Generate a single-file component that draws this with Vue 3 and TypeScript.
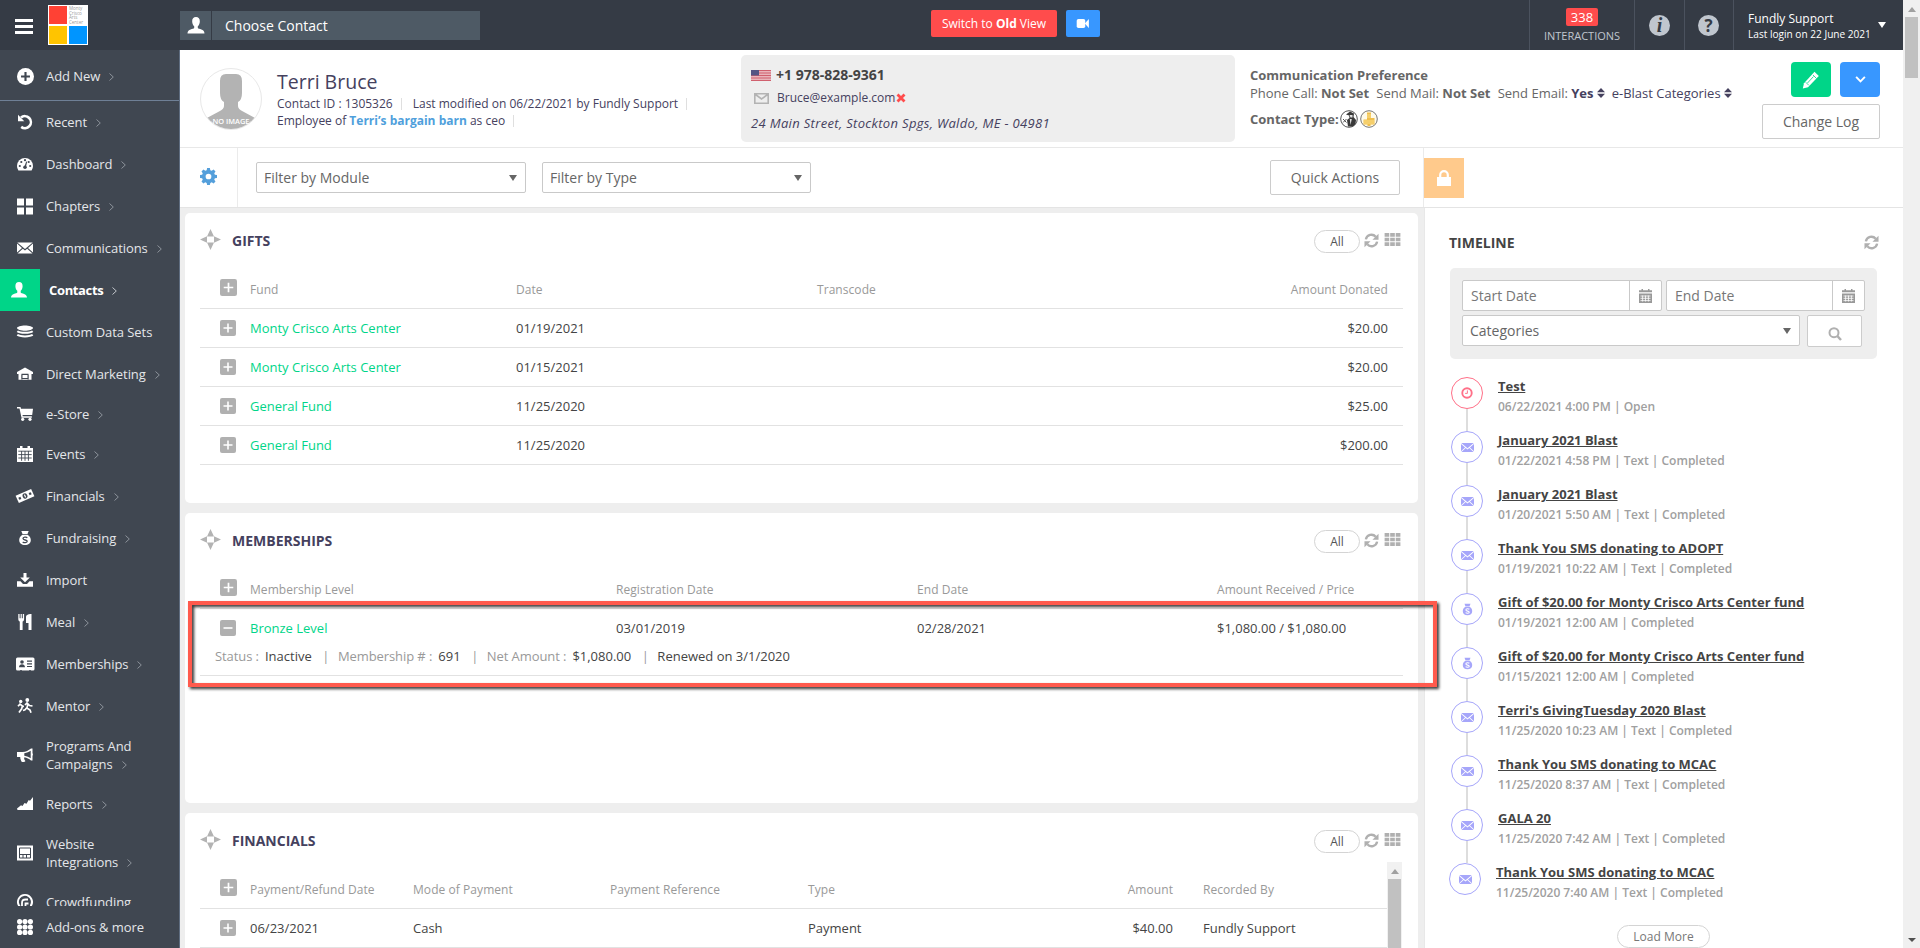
<script setup lang="ts">
interface NavItem {
  label: string
  icon: string
  height: number
  arrow?: boolean
  active?: boolean
  lines?: string[]
}

interface TimelineEntry {
  title: string
  meta: string
  kind: 'clock' | 'mail' | 'bag'
}

const icons: Record<string, string> = {
  addCircle:
    '<circle cx="8" cy="8" r="8"/><path d="M8 3.8v8.4M3.8 8h8.4" stroke="#404751" stroke-width="2"/>',
  recent:
    '<path d="M4 3.6A6 6 0 1 1 4.2 12.9" fill="none" stroke="currentColor" stroke-width="2.6"/><path d="M1 .8v6.4h6.3z"/>',
  dashboard:
    '<path d="M0 10a8 8 0 0 1 16 0 8 8 0 0 1-1.4 4.5H1.4A8 8 0 0 1 0 10z"/><g fill="#404751"><circle cx="2.8" cy="10" r="1.1"/><circle cx="4.3" cy="6" r="1.1"/><circle cx="8" cy="4.2" r="1.1"/><circle cx="11.7" cy="6" r="1.1"/><circle cx="13.2" cy="10" r="1.1"/><circle cx="8" cy="11.3" r="1.8"/><path d="M7.4 10.8 9.2 5.4l.9.3-1.2 5.6z"/></g>',
  chapters: '<path d="M0 0h7v7H0zM9 0h7v7H9zM0 9h7v7H0zM9 9h7v7H9z" transform="translate(0 .5)"/>',
  mail:
    '<path d="M.3 2.6h15.4L8 9z"/><path d="M0 3.6 5 8 0 12.6zM16 3.6 11 8l5 4.6zM5.8 8.7 8 10.6l2.2-1.9 5.3 4.7H.5z"/>',
  person:
    '<path d="M8 0C5.600 0 4.300 1.600 4.400 4.200c.1 2 .8 3.600 1.900 4.500v1.700C5.700 11.600 0 11.300 0 15.500h16c0-4.200-5.700-3.900-6.300-5.100V8.700c1.100-.9 1.800-2.500 1.900-4.500C11.700 1.600 10.400 0 8 0z"/>',
  layers:
    '<path d="M8 1.500c4 0 8 1.200 8 2.600S12 6.800 8 6.800 0 5.500 0 4.100s4-2.600 8-2.600z"/><path d="M.3 7.200C3 9.300 13 9.300 15.700 7.200M.3 10.800c2.700 2.100 12.700 2.100 15.400 0" fill="none" stroke="currentColor" stroke-width="2"/>',
  house:
    '<path d="M8 1.500 16 6v2h-1.500v5.800H1.500V8H0V6z"/><path d="M4.500 8.400h7M4.500 12.500h7M4.900 8.400v5M11.100 8.400v5" stroke="#404751" stroke-width="1.200" fill="none"/>',
  cart:
    '<path d="M0 1h3.500l.5 1.700h12L15.200 9H5.500l.3 1.300h9v1.400H4.500L2.500 2.500H0z"/><circle cx="5.700" cy="13.300" r="1.600"/><circle cx="13" cy="13.300" r="1.600"/>',
  calendar:
    '<path d="M0 2h16v14H0z"/><path d="M3 0h2.500v3H3zM10.500 0H13v3h-2.500z"/><path d="M1.300 5.200h13.400M1.300 8.600h13.400M1.300 12h13.400M4.600 5v9.800M8 5v9.800M11.400 5v9.800" stroke="#404751" stroke-width=".9"/>',
  money:
    '<g transform="rotate(-24 8 8)"><path d="M-.5 4h17v8h-17z"/><ellipse cx="8" cy="8" rx="2.400" ry="2.600" fill="#404751"/><path d="M1.200 8h2.300M12.500 8h2.300" stroke="#404751" stroke-width="2.400"/><path d="M8 6.500v3" stroke="currentColor" stroke-width="1.200"/></g>',
  bag:
    '<path d="M4.300 1h7.400L10.500 4h-5zM5.400 4.700h5.200C13 6.300 13.800 8.300 13.800 10c0 3.200-2.400 5-5.800 5s-5.800-1.800-5.800-5c0-1.700.8-3.700 3.200-5.300z"/><path d="M10.300 7.700C9.300 6.800 6 6.800 6 8.600s4.200 1 4.200 2.700c0 1.600-3.200 1.700-4.500.6" fill="none" stroke="var(--bag-ink, #404751)" stroke-width="1.300"/>',
  import:
    '<path d="M6.500 1h3v4.500h3.300L8 10.300 3.200 5.500h3.300z"/><path d="M0 9.200h3.500L6 12h4l2.500-2.800H16v5.500H0z"/>',
  meal:
    '<path d="M1.300 0h1.300v4.300h1V0h1.200v4.300h1V0h1.300v5.200c0 1.300-.7 2-1.500 2.300V16H2.800V7.500C2 7.200 1.300 6.500 1.300 5.200zM9 3.200C9 1.200 10.500.2 14.500 0v16h-3V9H9z"/>',
  idCard:
    '<rect x="-1" y="1.500" width="18.500" height="13" rx="1.500"/><g fill="#404751"><circle cx="5" cy="6" r="1.800"/><path d="M2 11.300c0-4 6-4 6 0zM10 4.600h5v1.100h-5zM10 7.300h5v1.100h-5zM10 10h5v1.100h-5zM3 14h2v.8H3zM12 14h2v.8h-2z"/></g>',
  mentor:
    '<circle cx="3.700" cy="3.500" r="1.700"/><circle cx="10.300" cy="2" r="1.900"/><path d="M1 8.300l2-2.200 2.500 2L4.500 11 2 14.500M5 8l2 .3M8 7l2-2 2.500 2.500L15.500 8M10.800 6l-.8 4 3 2 1 2.800M10 9.500l-2 2.300L6 12.500" fill="none" stroke="currentColor" stroke-width="1.700"/>',
  megaphone:
    '<path d="M0 5h5.500C9 4.800 11.500 3.500 14 1.500h1.500v4.700c.6.200.6 2.300 0 2.600v4.700H14c-2-1.600-4-2.700-6.600-3.200-.8 1.700.3 2.700 1 3.700-.5 1.200-3 1.300-4 .5C3.800 12.500 3 11.500 3.300 10H0z"/><path d="M7.300 6.300C10 5.800 12 5 13.700 3.800v7.500C12 10 10 9.100 7.300 8.700z" fill="#404751"/>',
  reports: '<path d="M.5 14 0 12.500l4-3.300 1.500.7L7.500 7l2 .7L11.700 4l1.300.8L16 1v13z"/>',
  website:
    '<path d="M0 .5h16v15H0z"/><path d="M2.500 3h11v10h-11zM2.500 9.500h11M6 9.500V13M9.500 9.500V13" fill="none" stroke="#404751" stroke-width="1"/>',
  crowd:
    '<path d="M8 0a8 8 0 0 0-6.600 12.500h2.700A6 6 0 1 1 13 11v1.500h1.600A8 8 0 0 0 8 0z"/><path d="M5 13V9q0-3.500 3.500-3.500H11M8.500 12V9.500h3" fill="none" stroke="currentColor" stroke-width="1.800"/>',
  dots:
    '<circle cx="2.600" cy="2.600" r="2.600"/><circle cx="8" cy="2.600" r="2.600"/><circle cx="13.400" cy="2.600" r="2.600"/><circle cx="2.600" cy="8" r="2.600"/><circle cx="8" cy="8" r="2.600"/><circle cx="13.400" cy="8" r="2.600"/><circle cx="2.600" cy="13.400" r="2.600"/><circle cx="8" cy="13.400" r="2.600"/><circle cx="13.400" cy="13.400" r="2.600"/>',
  gear:
    '<path fill-rule="evenodd" d="M6.700 0h2.600l.4 2 1.300.6 1.800-1.200 1.800 1.800L13.400 5l.6 1.300 2 .4v2.600l-2 .4-.6 1.300 1.200 1.800-1.800 1.800-1.800-1.200-1.300.6-.4 2H6.700l-.4-2-1.300-.6-1.800 1.200-1.800-1.800L2.600 11 2 9.700 0 9.300V6.700l2-.4L2.600 5 1.400 3.200l1.800-1.800L5 2.600 6.300 2zM8 5.300a2.700 2.700 0 1 0 0 5.400 2.700 2.700 0 0 0 0-5.400z"/>',
  refresh:
    '<path d="M2 6.800A6 6 0 0 1 12.500 4M14 9.200A6 6 0 0 1 3.500 12" fill="none" stroke="currentColor" stroke-width="2.500"/><path d="M15.500.7v6.500H9zM.5 15.300V8.800H7z"/>',
  grid:
    '<path d="M0 0h5v4H0zM6 0h5v4H6zM12 0h5v4h-5zM0 5h5v4H0zM6 5h5v4H6zM12 5h5v4h-5zM0 10h5v4H0zM6 10h5v4H6zM12 10h5v4h-5z"/>',
  move:
    '<path d="M10.500 0 14 7.400H7zM10.500 21 7 13.600h7zM0 10.500 7 7.200v6.600zM21 10.500l-7-3.300v6.600z"/>',
  plus: '<rect width="16" height="16" rx="2"/><path d="M8 3.500v9M3.500 8h9" stroke="#fff" stroke-width="1.600"/>',
  minus: '<rect width="16" height="16" rx="2"/><path d="M3.500 8h9" stroke="#fff" stroke-width="1.600"/>',
  clock:
    '<circle cx="8" cy="8" r="6.300" fill="none" stroke="currentColor" stroke-width="2.500"/><path d="M8.500 4.500v4H5.500" fill="none" stroke="currentColor" stroke-width="1.300"/>',
  smallCal:
    '<path d="M0 1.200h13v2H0zM2.500 0h1.500v2H2.500zM9 0h1.500v2H9zM0 4.500h13V14H0z"/><path d="M1.500 7h10M1.500 9.300h10M1.500 11.600h10M3.600 6.500v6M6.500 6.500v6M9.400 6.500v6" stroke="#fff" stroke-width=".8"/>',
  search:
    '<circle cx="6" cy="5.700" r="4.500" fill="none" stroke="currentColor" stroke-width="2"/><path d="m9.300 9 3.700 4" stroke="currentColor" stroke-width="2.500"/>',
}

const nav: NavItem[] = [
  { label: 'Recent', icon: 'recent', height: 42, arrow: true },
  { label: 'Dashboard', icon: 'dashboard', height: 42, arrow: true },
  { label: 'Chapters', icon: 'chapters', height: 42, arrow: true },
  { label: 'Communications', icon: 'mail', height: 42, arrow: true },
  { label: 'Contacts', icon: 'person', height: 42, arrow: true, active: true },
  { label: 'Custom Data Sets', icon: 'layers', height: 42 },
  { label: 'Direct Marketing', icon: 'house', height: 42, arrow: true },
  { label: 'e-Store', icon: 'cart', height: 38, arrow: true },
  { label: 'Events', icon: 'calendar', height: 42, arrow: true },
  { label: 'Financials', icon: 'money', height: 42, arrow: true },
  { label: 'Fundraising', icon: 'bag', height: 42, arrow: true },
  { label: 'Import', icon: 'import', height: 42 },
  { label: 'Meal', icon: 'meal', height: 42, arrow: true },
  { label: 'Memberships', icon: 'idCard', height: 42, arrow: true },
  { label: 'Mentor', icon: 'mentor', height: 42, arrow: true },
  { label: 'Programs And Campaigns', lines: ['Programs And', 'Campaigns'], icon: 'megaphone', height: 56, arrow: true },
  { label: 'Reports', icon: 'reports', height: 42, arrow: true },
  { label: 'Website Integrations', lines: ['Website', 'Integrations'], icon: 'website', height: 56, arrow: true },
  { label: 'Crowdfunding', icon: 'crowd', height: 42 },
]

const gifts = [
  { fund: 'Monty Crisco Arts Center', date: '01/19/2021', amount: '$20.00' },
  { fund: 'Monty Crisco Arts Center', date: '01/15/2021', amount: '$20.00' },
  { fund: 'General Fund', date: '11/25/2020', amount: '$25.00' },
  { fund: 'General Fund', date: '11/25/2020', amount: '$200.00' },
]

const timeline: TimelineEntry[] = [
  { title: 'Test', meta: '06/22/2021 4:00 PM | Open', kind: 'clock' },
  { title: 'January 2021 Blast', meta: '01/22/2021 4:58 PM | Text | Completed', kind: 'mail' },
  { title: 'January 2021 Blast', meta: '01/20/2021 5:50 AM | Text | Completed', kind: 'mail' },
  { title: 'Thank You SMS donating to ADOPT', meta: '01/19/2021 10:22 AM | Text | Completed', kind: 'mail' },
  { title: 'Gift of $20.00 for Monty Crisco Arts Center fund', meta: '01/19/2021 12:00 AM | Completed', kind: 'bag' },
  { title: 'Gift of $20.00 for Monty Crisco Arts Center fund', meta: '01/15/2021 12:00 AM | Completed', kind: 'bag' },
  { title: "Terri's GivingTuesday 2020 Blast", meta: '11/25/2020 10:23 AM | Text | Completed', kind: 'mail' },
  { title: 'Thank You SMS donating to MCAC', meta: '11/25/2020 8:37 AM | Text | Completed', kind: 'mail' },
  { title: 'GALA 20', meta: '11/25/2020 7:42 AM | Text | Completed', kind: 'mail' },
  { title: 'Thank You SMS donating to MCAC', meta: '11/25/2020 7:40 AM | Text | Completed', kind: 'mail' },
]
</script>

<template>
  <div class="page">
    <div class="app">
      <header class="top">
        <div class="burger"><i></i><i></i><i></i></div>
        <div class="logo">
          <span class="red"></span>
          <span class="words">Monty<br />Crisco<br />Arts<br />Center</span>
          <span class="yellow"></span>
          <span class="blue"></span>
        </div>
        <div class="choose">
          <span class="choose-icon"><svg viewBox="0 0 16 16" v-html="icons.person"></svg></span>
          <span class="choose-text">Choose Contact</span>
        </div>
        <div class="switch">Switch to&nbsp;<b>Old</b>&nbsp;View</div>
        <div class="video">
          <svg viewBox="0 0 14 10"><rect width="9.500" height="10" rx="2" /><path d="M9 5 13.500 0v10z" /></svg>
        </div>
        <div class="top-right">
          <div class="cell interactions"><span class="badge">338</span><span>INTERACTIONS</span></div>
          <div class="cell info">
            <span class="round serif">i</span>
          </div>
          <div class="cell help">
            <span class="round">?</span>
          </div>
          <div class="cell user">
            <div><p class="uname">Fundly Support</p><p class="ulogin">Last login on 22 June 2021</p></div>
            <i class="tri"></i>
          </div>
        </div>
      </header>

      <div class="body">
        <aside class="side">
          <div class="nav-item add">
            <span class="nav-icon"><svg viewBox="0 0 16 16" v-html="icons.addCircle"></svg></span>
            <span class="nav-label">Add New<svg class="chev" viewBox="0 0 5 8"><path d="m.5.500 3.800 3.500L.5 7.500" /></svg></span>
          </div>
          <nav class="nav">
            <div
              v-for="item in nav"
              :key="item.label"
              class="nav-item"
              :class="{ active: item.active }"
              :style="{ height: item.height + 'px' }"
            >
              <span class="nav-icon"><svg viewBox="0 0 16 16" v-html="icons[item.icon]"></svg></span>
              <span class="nav-label">
                <template v-if="item.lines">{{ item.lines[0] }}<br />{{ item.lines[1] }}</template>
                <template v-else>{{ item.label }}</template>
                <svg v-if="item.arrow" class="chev" viewBox="0 0 5 8"><path d="m.5.500 3.800 3.500L.5 7.500" /></svg>
              </span>
            </div>
          </nav>
          <div class="nav-item addons">
            <span class="nav-icon"><svg viewBox="0 0 16 16" v-html="icons.dots"></svg></span>
            <span class="nav-label">Add-ons &amp; more</span>
          </div>
        </aside>

        <main class="main">
          <section class="contact">
            <svg class="avatar" viewBox="0 0 62 62">
              <defs><clipPath id="face"><circle cx="31" cy="31" r="30" /></clipPath></defs>
              <circle cx="31" cy="31" r="30.500" fill="#fff" stroke="#e8e8e8" />
              <path
                clip-path="url(#face)"
                d="M26 6h10q6 0 6 7v12q0 7-4 9v4q0 3 5 5.500l14 7.500v11H5V51l14-7.500q5-2.500 5-5.500v-4q-4-2-4-9V13q0-7 6-7z"
                fill="#b3b3b3"
              />
              <text x="31" y="55.500" text-anchor="middle" font-size="7.400" font-weight="600" fill="#fff">NO IMAGE</text>
            </svg>
            <div class="who">
              <h1>Terri Bruce</h1>
              <p>Contact ID : 1305326<i></i>Last modified on 06/22/2021 by Fundly Support<i></i></p>
              <p>Employee of <b>Terri’s bargain barn</b> as ceo<i></i></p>
            </div>
            <div class="reach">
              <p class="phone">
                <svg class="flag" viewBox="0 0 20 11">
                  <rect width="20" height="11" fill="#e9b4ba" />
                  <path d="M0 .5h20M0 3h20M0 5.500h20M0 8h20M0 10.500h20" stroke="#d0606e" />
                  <rect width="8" height="5.500" fill="#535584" />
                </svg>
                +1 978-828-9361
              </p>
              <p class="email">
                <svg class="env" viewBox="0 0 15 11"><path d="M.8.800h13.400v9.400H.8zM1.500 1.500l6 4.500 6-4.500" /></svg>
                <span>Bruce@example.com</span>
                <svg class="cross" viewBox="0 0 8 8"><path d="m.5.500 7 7M7.500.5l-7 7" /></svg>
              </p>
              <p class="addr">24 Main Street, Stockton Spgs, Waldo, ME - 04981</p>
            </div>
            <div class="prefs">
              <p><b>Communication Preference</b></p>
              <p class="pref-line">
                <span>Phone Call: <b>Not Set</b></span>
                <span>Send Mail: <b>Not Set</b></span>
                <span>Send Email: <b class="dark">Yes</b><svg class="sort" viewBox="0 0 8 10"><path d="M4 0l4 4.200H0zM4 10 0 5.800h8z" /></svg></span>
                <span class="dark">e-Blast Categories<svg class="sort" viewBox="0 0 8 10"><path d="M4 0l4 4.200H0zM4 10 0 5.800h8z" /></svg></span>
              </p>
              <p class="ctype">
                <b>Contact Type:</b>
                <svg viewBox="0 0 18 18">
                  <circle cx="9" cy="9" r="8.300" fill="#fff" stroke="#555" />
                  <path d="M6 4.500 10 1.500l4 2-.5 3.500 2.500 3-.5 4-2.500 2.500H8L7 10l2.500-2-.5-2.500z" fill="#3a3a3a" />
                  <path d="m3 9 3.500 3.500m0-3.500L3 12.500" stroke="#555" />
                  <path d="M9.500 5h3v2.500h-2zM9.800 9l.7 6 1.300-6z" fill="#e4e4e4" />
                </svg>
                <svg viewBox="0 0 18 18">
                  <circle cx="9" cy="9" r="8.300" fill="#fffbe9" stroke="#777" />
                  <path d="M7 2.500h4V8h3.500v6.500h-4v1.500h-3v-1.500h-4V9.500H7z" fill="#f0be4a" />
                  <path d="M7 5h4M7 7h4M4 11h10M4 13h10" stroke="#fbe08c" />
                </svg>
              </p>
            </div>
            <div class="acts">
              <div class="pair">
                <span class="edit"><svg viewBox="0 0 18 18"><path d="M12.500.8 16.800 5 6 16.200.8 17.400 2 12.200z" /><path d="m3.800 11.300 3 3M11 4l3.500 3.500M5.500 12l6-6.500" class="cut" /></svg></span>
                <span class="more"><svg viewBox="0 0 12 8"><path d="m1 1 5 5.200L11 1" /></svg></span>
              </div>
              <div class="btn log">Change Log</div>
            </div>
          </section>

          <section class="tools">
            <div class="gear"><svg viewBox="0 0 16 16" v-html="icons.gear"></svg></div>
            <div class="select">Filter by Module<i class="tri"></i></div>
            <div class="select type">Filter by Type<i class="tri"></i></div>
            <div class="btn quick">Quick Actions</div>
            <div class="lockwrap">
              <div class="lock"><svg viewBox="0 0 14 16"><path d="M0 7h14v9H0z" /><path d="M3.200 7.500V5a3.800 3.800 0 0 1 7.600 0v2.500" class="ring" /></svg></div>
            </div>
          </section>

          <div class="content">
            <div class="cards">
              <article class="card">
                <div class="card-head">
                  <svg class="move" viewBox="0 0 21 21" v-html="icons.move"></svg>
                  <h2>GIFTS</h2>
                  <span class="all">All</span>
                  <svg class="ref" viewBox="0 0 16 16" v-html="icons.refresh"></svg>
                  <svg class="grd" viewBox="0 0 17 14" v-html="icons.grid"></svg>
                </div>
                <div class="row head gifts">
                  <svg class="pm" viewBox="0 0 16 16" v-html="icons.plus"></svg>
                  <span>Fund</span><span>Date</span><span>Transcode</span><span class="r">Amount Donated</span>
                </div>
                <div v-for="(g, i) in gifts" :key="i" class="row gifts">
                  <svg class="pm" viewBox="0 0 16 16" v-html="icons.plus"></svg>
                  <span class="link">{{ g.fund }}</span><span>{{ g.date }}</span><span></span><span class="r">{{ g.amount }}</span>
                </div>
              </article>

              <article class="card">
                <div class="card-head">
                  <svg class="move" viewBox="0 0 21 21" v-html="icons.move"></svg>
                  <h2>MEMBERSHIPS</h2>
                  <span class="all">All</span>
                  <svg class="ref" viewBox="0 0 16 16" v-html="icons.refresh"></svg>
                  <svg class="grd" viewBox="0 0 17 14" v-html="icons.grid"></svg>
                </div>
                <div class="row head members">
                  <svg class="pm" viewBox="0 0 16 16" v-html="icons.plus"></svg>
                  <span>Membership Level</span><span>Registration Date</span><span>End Date</span><span>Amount Received / Price</span>
                </div>
                <div class="row members open">
                  <svg class="pm" viewBox="0 0 16 16" v-html="icons.minus"></svg>
                  <span class="link">Bronze Level</span><span>03/01/2019</span><span>02/28/2021</span><span>$1,080.00 / $1,080.00</span>
                </div>
                <div class="detail">
                  <span><em>Status :</em> Inactive</span>
                  <span><em>Membership # :</em> 691</span>
                  <span><em>Net Amount :</em> $1,080.00</span>
                  <span>Renewed on 3/1/2020</span>
                </div>
                <div class="marker"></div>
              </article>

              <article class="card">
                <div class="card-head">
                  <svg class="move" viewBox="0 0 21 21" v-html="icons.move"></svg>
                  <h2>FINANCIALS</h2>
                  <span class="all">All</span>
                  <svg class="ref" viewBox="0 0 16 16" v-html="icons.refresh"></svg>
                  <svg class="grd" viewBox="0 0 17 14" v-html="icons.grid"></svg>
                </div>
                <div class="scroller">
                  <div class="grow">
                    <div class="row head fin">
                      <svg class="pm" viewBox="0 0 16 16" v-html="icons.plus"></svg>
                      <span>Payment/Refund Date</span><span>Mode of Payment</span><span>Payment Reference</span><span>Type</span><span class="r">Amount</span><span class="rec">Recorded By</span>
                    </div>
                    <div class="row fin">
                      <svg class="pm" viewBox="0 0 16 16" v-html="icons.plus"></svg>
                      <span>06/23/2021</span><span>Cash</span><span></span><span>Payment</span><span class="r">$40.00</span><span class="rec">Fundly Support</span>
                    </div>
                  </div>
                  <div class="inner-bar"><i class="up"></i><i class="thumb"></i></div>
                </div>
              </article>
            </div>

            <aside class="time">
              <div class="time-head">
                <h2>TIMELINE</h2>
                <svg class="ref" viewBox="0 0 16 16" v-html="icons.refresh"></svg>
              </div>
              <div class="filter">
                <div class="frow">
                  <div class="date"><span>Start Date</span><i><svg viewBox="0 0 13 14" v-html="icons.smallCal"></svg></i></div>
                  <div class="date end"><span>End Date</span><i><svg viewBox="0 0 13 14" v-html="icons.smallCal"></svg></i></div>
                </div>
                <div class="frow second">
                  <div class="select cat">Categories<i class="tri"></i></div>
                  <div class="find"><svg viewBox="0 0 14 14" v-html="icons.search"></svg></div>
                </div>
              </div>
              <ul class="events">
                <li v-for="(e, i) in timeline" :key="i">
                  <span class="dot" :class="e.kind"><svg viewBox="0 0 16 16" v-html="icons[e.kind]"></svg></span>
                  <div><a>{{ e.title }}</a><p>{{ e.meta }}</p></div>
                </li>
              </ul>
              <div class="load">Load More</div>
            </aside>
          </div>
        </main>
      </div>
    </div>
    <div class="bar"><i class="up"></i><i class="thumb"></i><i class="down"></i></div>
  </div>
</template>

<style>
body {
  overflow: hidden;
}
</style>

<style scoped>
* {
  box-sizing: border-box;
}
p,
h1,
h2,
ul {
  margin: 0;
  padding: 0;
}
svg {
  display: block;
  fill: currentColor;
  flex: none;
  overflow: visible;
}
i {
  font-style: normal;
}
.page {
  display: flex;
  width: 1920px;
  height: 948px;
  overflow: hidden;
  font-family: 'Open Sans', sans-serif;
  font-size: 13px;
  line-height: 18px;
  color: #444;
  background: #fff;
}
.app {
  width: 1903px;
  display: flex;
  flex-direction: column;
}

/* top bar */
.top {
  height: 50px;
  flex: none;
  display: flex;
  align-items: center;
  background: #353b45;
  color: #fff;
}
.burger {
  margin-left: 15px;
  width: 18px;
  display: grid;
  gap: 3px;
  margin-top: 3px;
}
.burger i {
  height: 3px;
  background: #fff;
}
.logo {
  width: 40px;
  height: 40px;
  margin-left: 15px;
  background: #fff;
  display: grid;
  grid-template-columns: 18px 18px;
  grid-template-rows: 18px 18px;
  gap: 2px;
  padding: 1px;
}
.red {
  background: #ff4134;
}
.yellow {
  background: #ffc400;
}
.blue {
  background: #0095ff;
}
.words {
  font-size: 4.500px;
  line-height: 4.700px;
  color: #999;
}
.choose {
  display: flex;
  margin-left: 92px;
  gap: 1px;
  height: 29px;
  margin-top: 1px;
}
.choose-icon {
  width: 31px;
  background: #4e5a65;
  display: grid;
  place-items: center;
}
.choose-icon svg {
  width: 18px;
  height: 17px;
}
.choose-text {
  width: 268px;
  background: #4e5a65;
  padding-left: 13px;
  font-size: 14px;
  line-height: 30px;
}
.switch {
  margin-left: 451px;
  width: 126px;
  height: 27px;
  margin-top: -3px;
  border-radius: 2px;
  background: #ff4c4c;
  font-size: 12px;
  line-height: 28px;
  display: flex;
  justify-content: center;
}
.video {
  margin: -3px 0 0 9px;
  width: 34px;
  height: 27px;
  border-radius: 2px;
  background: #3897ff;
  display: grid;
  place-items: center;
}
.video svg {
  width: 14px;
  height: 9px;
}
.top-right {
  margin-left: auto;
  display: flex;
  height: 50px;
}
.cell {
  border-left: 1px solid #4b525e;
  display: flex;
  align-items: center;
  justify-content: center;
}
.interactions {
  width: 105px;
  flex-direction: column;
  justify-content: flex-start;
  font-size: 11px;
  color: #c0c6ce;
  padding-top: 8px;
}
.badge {
  background: #ff4c4c;
  color: #fff;
  border-radius: 2px;
  width: 32px;
  height: 18px;
  font-size: 13px;
  line-height: 18px;
  text-align: center;
  margin-bottom: 1px;
}
.info {
  width: 50px;
}
.help {
  width: 49px;
  padding-right: 1px;
}
.round {
  width: 21px;
  height: 21px;
  border-radius: 50%;
  background: #c0c6ce;
  color: #353b45;
  font-weight: 700;
  font-size: 17px;
  line-height: 21px;
  text-align: center;
}
.serif {
  font-family: 'Liberation Serif', serif;
  font-style: italic;
  font-size: 20px;
  line-height: 20px;
}
.user {
  width: 170px;
  padding-left: 14px;
  justify-content: flex-start;
}
.uname {
  font-size: 12px;
  line-height: 16px;
  margin-top: 2px;
}
.ulogin {
  width: 121px;
  font-size: 10.100px;
  line-height: 14px;
  white-space: nowrap;
}
.tri {
  width: 0;
  border: 4px solid transparent;
  border-top: 6px solid currentColor;
  border-bottom: 0;
}
.user .tri {
  margin-left: 9px;
}

/* sidebar */
.body {
  display: flex;
  flex: 1;
  min-height: 0;
}
.side {
  width: 180px;
  flex: none;
  background: #404751;
  border-right: 1px solid #5f6d80;
  color: #e4e6e9;
  display: flex;
  flex-direction: column;
}
.nav {
  height: 805px;
  overflow: hidden;
  flex: none;
}
.nav-item {
  display: flex;
  align-items: center;
}
.add {
  height: 51px;
  border-bottom: 1px solid #6f8096;
  padding-top: 2px;
}
.addons {
  height: 42px;
}
.nav-icon {
  width: 46px;
  align-self: stretch;
  display: flex;
  align-items: center;
  padding-left: 17px;
  color: #fff;
}
.nav-icon svg {
  width: 16px;
  height: 16px;
}
.nav-label {
  letter-spacing: -0.070px;
}
.add .nav-icon svg {
  width: 17px;
  height: 17px;
}
.chev {
  display: inline-block;
  width: 5px;
  height: 8px;
  margin-left: 9px;
  fill: none;
  stroke: #8d939b;
  stroke-width: 1;
}
.active .nav-icon {
  width: 40px;
  padding-left: 10px;
  background: #00d588;
}
.active .nav-icon svg {
  width: 18px;
}
.active .nav-label {
  margin-left: 9px;
  color: #fff;
  font-weight: 700;
  letter-spacing: -0.350px;
}
.active .chev {
  stroke: #c2c6cb;
}

/* contact header */
.main {
  flex: 1;
  min-width: 0;
  display: flex;
  flex-direction: column;
}
.contact {
  height: 98px;
  flex: none;
  border-bottom: 1px solid #e8e8e8;
  display: flex;
  color: #45415e;
}
.avatar {
  width: 62px;
  height: 62px;
  margin: 18px 0 0 20px;
}
.who {
  width: 464px;
  margin-left: 15px;
  padding-top: 19px;
  font-size: 12px;
  line-height: 17px;
}
.who h1 {
  font-weight: 400;
  font-size: 19.500px;
  line-height: 26px;
}
.who p {
  white-space: nowrap;
}
.who b {
  color: #4f9fdc;
}
.who p i {
  display: inline-block;
  width: 1px;
  height: 12px;
  background: #dfdfdf;
  margin: 0 11px 0 8px;
  vertical-align: -2px;
}
.reach {
  width: 494px;
  height: 87px;
  margin-top: 5px;
  border-radius: 5px;
  background: #eee;
  padding: 10px;
}
.phone {
  display: flex;
  align-items: center;
  gap: 5px;
  font-weight: 700;
  font-size: 14px;
  line-height: 20px;
  color: #444;
}
.flag {
  width: 20px;
  height: 11px;
}
.email {
  display: flex;
  align-items: center;
  margin-top: 4px;
  font-size: 12px;
}
.env {
  width: 15px;
  height: 11px;
  margin: 1px 8px 0 3px;
  fill: none;
  stroke: #b3b3b3;
  stroke-width: 1.600;
}
.cross {
  width: 8px;
  height: 8px;
  margin-left: 2px;
  stroke: #ff4c4c;
  stroke-width: 2.800;
}
.addr {
  font-style: italic;
  font-size: 13px;
  letter-spacing: 0.330px;
  margin-top: 7px;
}
.prefs {
  margin-left: 15px;
  padding-top: 16px;
  color: #666;
  white-space: nowrap;
}
.pref-line {
  display: flex;
  gap: 7.200px;
}
.dark {
  color: #45415e;
}
.sort {
  display: inline-block;
  width: 8px;
  height: 10px;
  margin-left: 3px;
  color: #45415e;
}
.ctype {
  display: flex;
  align-items: center;
  gap: 1px;
  margin-top: 8px;
}
.ctype svg {
  width: 18px;
  height: 18px;
  margin-right: 1px;
}
.acts {
  margin: 12px 23px 0 auto;
}
.pair {
  display: flex;
  justify-content: flex-end;
  gap: 9px;
  margin-bottom: 7px;
}
.edit,
.more {
  width: 40px;
  height: 35px;
  border-radius: 4px;
  display: grid;
  place-items: center;
  background: #00d588;
  color: #fff;
}
.edit svg {
  width: 18px;
  height: 18px;
}
.cut {
  stroke: #00d588;
  stroke-width: 0.800;
}
.more {
  background: #3897ff;
}
.more svg {
  width: 11px;
  height: 7px;
  fill: none;
  stroke: #fff;
  stroke-width: 2.200;
}
.btn {
  border: 1px solid #ccc;
  border-radius: 2px;
  background: #fff;
  color: #666;
  font-size: 14px;
  height: 35px;
  line-height: 34px;
  text-align: center;
}
.log {
  width: 118px;
}

/* filter toolbar */
.tools {
  height: 60px;
  flex: none;
  display: flex;
  align-items: center;
  border-bottom: 1px solid #e4e4e4;
}
.gear {
  width: 58px;
  height: 59px;
  border-right: 1px solid #ebebeb;
  padding: 20px 0 0 20px;
  margin-right: 18px;
  color: #549fdb;
}
.gear svg {
  width: 17px;
  height: 17px;
}
.select {
  width: 270px;
  height: 31px;
  border: 1px solid #c9c9c9;
  border-radius: 2px;
  background: #fff;
  color: #666;
  font-size: 14px;
  line-height: 29px;
  padding: 0 8px 0 7px;
  margin-right: 16px;
  display: flex;
  align-items: center;
  justify-content: space-between;
}
.type {
  width: 269px;
}
.quick {
  width: 130px;
  margin-left: 443px;
}
.lockwrap {
  margin-left: 23px;
  height: 59px;
  border-left: 1px solid #ebebeb;
  padding-top: 10px;
}
.lock {
  width: 40px;
  height: 40px;
  background: #ffca8c;
  color: #fff;
  display: grid;
  place-items: center;
}
.lock svg {
  width: 14px;
  height: 16px;
  margin-top: -1px;
}
.ring {
  fill: none;
  stroke: #fff;
  stroke-width: 2.200;
}

/* cards */
.content {
  flex: 1;
  min-height: 0;
  display: flex;
}
.cards {
  width: 1244px;
  flex: none;
  background: #eee;
  padding: 5px 6px 0 5px;
  display: flex;
  flex-direction: column;
  gap: 10px;
}
.card {
  height: 290px;
  flex: none;
  border-radius: 5px;
  background: #fff;
  padding: 0 15px;
  position: relative;
}
.card-head {
  height: 54px;
  display: flex;
  align-items: flex-start;
}
.move {
  width: 21px;
  height: 21px;
  margin-top: 16px;
  color: #b3b3b3;
}
h2 {
  font-size: 14px;
  line-height: 20px;
  color: #45415e;
}
.card-head h2 {
  margin: 18px auto 0 11px;
}
.all {
  width: 46px;
  height: 23px;
  margin-top: 17px;
  border: 1px solid #d4d4d4;
  border-radius: 12px;
  font-size: 12px;
  line-height: 22px;
  text-align: center;
  color: #555;
}
.ref {
  width: 15px;
  height: 15px;
  color: #b0b0b0;
}
.card-head .ref {
  margin: 20px 5px 0 4px;
}
.grd {
  width: 17px;
  height: 13px;
  color: #b0b0b0;
  margin: 20px 2px 0 0;
}
.row {
  height: 39px;
  display: grid;
  align-items: center;
  border-bottom: 1px solid #e2e2e2;
  padding-left: 20px;
}
.row span {
  padding-bottom: 1px;
}
.head {
  height: 42px;
  color: #999;
  font-size: 12px;
  letter-spacing: 0.060px;
}
.head span {
  padding: 5px 0 0;
}
.head .pm {
  width: 17px;
  height: 17px;
  margin-bottom: 1px;
}
.pm {
  width: 16px;
  height: 16px;
  margin-bottom: 1px;
  color: #b0b0b0;
}
.row .r {
  text-align: right;
}
.link {
  color: #00d588;
}
.gifts {
  grid-template-columns: 30px 266px 301px 200px 1fr;
  padding-right: 15px;
}
.members {
  grid-template-columns: 30px 366px 301px 300px 1fr;
}
.open {
  border-bottom: 0;
  height: 38px;
}
.detail {
  height: 29px;
  display: flex;
  padding: 0 0 0 15px;
  border-bottom: 1px solid #e2e2e2;
}
.detail span {
  display: flex;
  gap: 6px;
}
.detail em {
  font-style: normal;
  color: #999;
  letter-spacing: -0.080px;
}
.detail span + span::before {
  content: '|';
  color: #999;
  margin: 0 2.500px 0 10.500px;
}
.marker {
  position: absolute;
  left: 3px;
  top: 88px;
  width: 1249px;
  height: 86px;
  border: 4px solid #ff5a4d;
  filter: drop-shadow(2px 2px 1.500px rgba(0, 0, 0, 0.8));
  z-index: 3;
}
.scroller {
  display: flex;
  margin-top: -5px;
}
.grow {
  flex: 1;
  padding-top: 5px;
}
.fin {
  grid-template-columns: 30px 163px 197px 198px 219px 146px 1fr;
}
.fin .rec {
  padding-left: 30px;
}
.inner-bar {
  width: 15px;
  margin-right: 1px;
  height: 120px;
  background: #f1f1f1;
  display: flex;
  flex-direction: column;
  align-items: center;
}
.up {
  border: 4px solid transparent;
  border-bottom: 5px solid #a0a0a0;
  border-top: 0;
}
.inner-bar .up {
  margin: 7px 0 5px;
}
.inner-bar .thumb {
  width: 13px;
  flex: 1;
  background: #c1c1c1;
}

/* timeline */
.time {
  flex: 1;
  border-left: 1px solid #e8e8e8;
  padding: 25px 26px 0 25px;
}
.time-head {
  display: flex;
  justify-content: space-between;
}
.time-head h2 {
  color: #444;
  margin-left: -1px;
}
.time-head .ref {
  margin-top: 2px;
  margin-right: -2px;
}
.filter {
  margin-top: 15px;
  height: 91px;
  width: 427px;
  background: #eee;
  border-radius: 5px;
  padding: 12px;
  color: #777;
}
.frow {
  display: flex;
  gap: 4px;
}
.date {
  width: 200px;
  height: 31px;
  border: 1px solid #c9c9c9;
  border-radius: 2px;
  background: #fff;
  display: flex;
  font-size: 14px;
  line-height: 30px;
}
.date.end {
  width: 199px;
}
.date span {
  flex: 1;
  padding-left: 8px;
}
.date i {
  width: 32px;
  border-left: 1px solid #c9c9c9;
  display: grid;
  place-items: center;
  color: #999;
}
.date svg {
  width: 13px;
  height: 14px;
}
.second {
  margin-top: 4px;
}
.cat {
  width: 338px;
  margin-right: 3px;
}
.find {
  width: 55px;
  height: 32px;
  border: 1px solid #ccc;
  border-radius: 2px;
  background: #fff;
  padding: 11px 0 0 20px;
  color: #b0b0b0;
}
.find svg {
  width: 14px;
  height: 14px;
}
.events {
  list-style: none;
  margin-top: 18px;
}
.events li {
  height: 54px;
  display: flex;
  margin-left: 1px;
  background: linear-gradient(#ddd, #ddd) 15px 32px / 2px 22px no-repeat;
}
.events li:last-child {
  background: none;
  margin-left: -1px;
}
.dot {
  width: 32px;
  height: 32px;
  border: 1px solid #a6a6fa;
  border-radius: 50%;
  color: #a6a6fa;
  display: grid;
  place-items: center;
  margin-right: 15px;
  --bag-ink: #fff;
}
.dot svg {
  width: 13px;
  height: 13px;
}
.dot.clock {
  color: #ff7088;
  border-color: #ff7088;
}
.dot.clock svg {
  width: 12px;
  height: 12px;
}
.events a {
  display: block;
  font-weight: 700;
  font-size: 13px;
  line-height: 18px;
  text-decoration: underline;
  color: #444;
}
.events p {
  font-weight: 600;
  font-size: 12px;
  line-height: 18px;
  margin-top: 3px;
  color: #a0a0a0;
}
.load {
  width: 93px;
  height: 23px;
  margin: 8px 0 0 167px;
  border: 1px solid #d4d4d4;
  border-radius: 12px;
  text-align: center;
  font-size: 12px;
  line-height: 22px;
  color: #777;
}

/* page scrollbar */
.bar {
  width: 17px;
  background: #f0f0f0;
  display: flex;
  flex-direction: column;
  align-items: center;
}
.bar .up {
  margin: 7px 0 5px;
}
.bar .thumb {
  width: 13px;
  height: 61px;
  background: #c1c1c1;
}
.bar .down {
  margin: auto 0 6px;
  border: 4px solid transparent;
  border-top: 4px solid #505050;
  border-bottom: 0;
}
</style>
